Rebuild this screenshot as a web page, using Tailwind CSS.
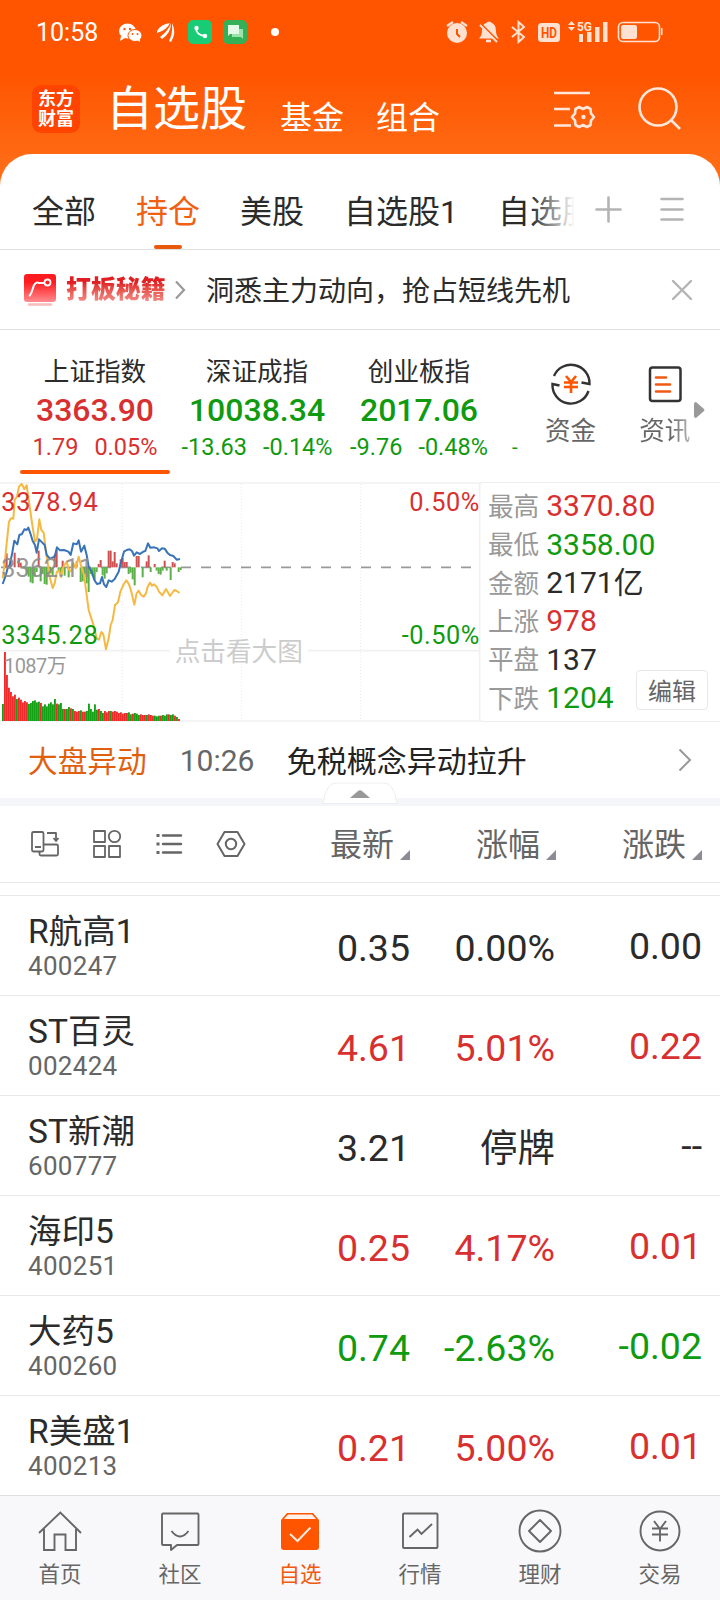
<!DOCTYPE html>
<html lang="zh-CN">
<head>
<meta charset="utf-8">
<title>自选股</title>
<script src="https://cdn.jsdelivr.net/npm/@tailwindcss/browser@4"></script>
</head>
<body class="bg-white">
<div class="w-[720px] h-[1600px] overflow-hidden flex flex-col bg-white font-['Roboto','Noto_Sans_CJK_SC',sans-serif] leading-none text-[#2b2b2b] whitespace-nowrap">

  <div class="bg-linear-to-b from-[#ff5500] from-40% to-[#ff7018] h-[186px] shrink-0 flex flex-col">
    <!-- status bar -->
    <div class="h-[64px] flex items-center pl-[36px] text-white">
      <span class="text-[25px] w-[83px] pt-px">10:58</span>
      <svg width="170" height="30" viewBox="119 17 170 30">
        <ellipse cx="127.500" cy="31" rx="8.500" ry="7.500" fill="#fff"/><path d="M121 36l-1 5 5-3z" fill="#fff"/>
        <ellipse cx="135" cy="35.500" rx="7" ry="6" fill="#fff" stroke="#ff5500" stroke-width="1"/><path d="M137 40l3 2v-4z" fill="#fff"/>
        <g fill="#ff5500"><circle cx="124.500" cy="29" r="1.200"/><circle cx="130" cy="29" r="1.200"/><circle cx="132.500" cy="34" r="1"/><circle cx="137.500" cy="34" r="1"/></g>
        <g fill="#fff"><path d="M157 31Q161 24 170 23Q167 30 157 33z"/><path d="M160 37Q168 31 171 23.500Q171 33 162 39z"/><path d="M169 41Q173 34 172 23Q177 33 171 42z"/></g>
        <rect x="188" y="20" width="24" height="24" rx="5" fill="#17cc75"/>
        <path d="M196 28q0 7 9 8" fill="none" stroke="#fff" stroke-width="1.800"/><circle cx="196.500" cy="28" r="2.200" fill="#fff"/><circle cx="205" cy="36" r="2.200" fill="#fff"/>
        <rect x="223" y="20" width="24" height="24" rx="5" fill="#34b056"/>
        <path d="M232 29h11v10l-2-2h-9z" fill="#9be2ab"/><path d="M228 25h11v9h-9l-2 2z" fill="#e4fae8"/>
        <circle cx="275" cy="32" r="4" fill="#fff"/>
      </svg>
      <svg class="ml-[154px]" width="224" height="30" viewBox="443 17 224 30" fill="none" stroke="#ffe1d1">
        <circle cx="457" cy="33" r="10" fill="#ffe1d1" stroke="none"/><path d="M447 26l6-4M467 26l-6-4" stroke-width="2.200"/><path d="M457 29v5l3 3" stroke="#ff5500" stroke-width="2"/>
        <path d="M479 38.500q3-3 3-8q0-6 4-7.500q3-3 6 0q4 2 4 8q0 5 3 7.500z" fill="#ffe1d1" stroke="none"/><path d="M486 41h5" stroke-width="2.500"/><path d="M481 24l17 17" stroke="#ff5500" stroke-width="2"/><path d="M480 25l17 17" stroke-width="2"/>
        <path d="M512 27l12 10-5.500 5V22l5.500 5-12 10" stroke-width="2"/>
        <rect x="538" y="23" width="22" height="19" rx="3.500" fill="#ffe1d1" stroke="none"/><text x="549" y="38" font-size="14" font-weight="bold" text-anchor="middle" textLength="16" lengthAdjust="spacingAndGlyphs" fill="#ff5500" stroke="none">HD</text>
        <g fill="#ffe1d1" stroke="none"><path d="M568 25l3.500-4 3.500 4zM568 27l3.500 4 3.500-4z"/>
        <text x="577" y="31" font-size="12" font-weight="bold" textLength="15" lengthAdjust="spacingAndGlyphs">5G</text>
        <path d="M579 34h4v8h-4zM587 32h4.500v10H587zM595 27h4.500v15H595zM603 22h4.500v20H603z"/>
        <rect x="621" y="25" width="16" height="14" rx="2"/><path d="M661 28h1.500v7H661z"/></g>
        <rect x="618.500" y="22.500" width="41" height="19" rx="4.500" stroke-width="1.600"/>
      </svg>
    </div>
    <!-- app header -->
    <div class="h-[90px] flex items-start pl-[32px] text-white">
      <div class="mt-[21px] size-[48px] rounded-[9px] bg-[#ff4400] flex flex-col items-center justify-center text-[18px] font-bold gap-[2px]"><span class="leading-[18px]">东方</span><span class="leading-[18px]">财富</span></div>
      <span class="text-[47px] ml-[26px] mt-[21px]">自选股</span>
      <span class="text-[32px] ml-[33px] mt-[38px]">基金</span>
      <span class="text-[32px] ml-[32px] mt-[38px]">组合</span>
      <svg class="ml-[112px] mt-[21px]" width="134" height="48" viewBox="552 85 134 48" fill="none" stroke="#ffe7db" stroke-width="2.600">
        <path d="M554 93h36M554 109h16M554 125.500h17"/>
        <path d="M579 107l4 2 4-2 3.500 2 .500 4.500 3 3.500-3 3.500-.500 4.500-3.500 2-4-2-4 2-3.500-2-.500-4.500-3-3.500 3-3.500.500-4.500z" stroke-linejoin="round"/><circle cx="583.500" cy="117" r="2.200" fill="#ffe7db" stroke="none"/>
        <circle cx="658" cy="107" r="18.500"/><path d="M671 120l9 9"/>
      </svg>
    </div>
  </div>

  <!-- group tabs -->
  <div class="relative -mt-[32px] h-[96px] shrink-0 bg-white rounded-t-[32px] border-b border-[#dfdfdf] flex items-center pl-[32px] text-[32px]">
    <div class="relative w-[543px] h-full overflow-hidden flex items-center gap-[40px] pt-[21px]">
      <span>全部</span><span class="text-[#f06010] relative">持仓<i class="absolute left-[18px] top-[49px] w-[28px] h-[4px] rounded-full bg-[#e8590c]"></i></span><span>美股</span><span>自选股1</span><span>自选股</span>
      <div class="absolute right-0 top-0 h-[90px] w-[44px] bg-linear-to-r from-white/0 to-white"></div>
    </div>
    <svg class="ml-[20px] mt-[17px]" width="90" height="30" viewBox="595 195 90 30" stroke="#b4b4b4" stroke-width="2.600" stroke-linecap="round"><path d="M596.500 209.500h24M608.500 197.500v24"/><path d="M661.500 199h21M661.500 209.500h21M661.500 219.500h21"/></svg>
  </div>

  <!-- banner -->
  <div class="h-[80px] shrink-0 border-b border-[#dfdfdf] flex items-center pl-[24px] text-[28px]">
    <svg width="32" height="32" viewBox="0 0 32 32">
      <defs><linearGradient id="r" x2="0" y2="1"><stop offset=".3" stop-color="#ff1c20"/><stop offset="1" stop-color="#ff8d90"/></linearGradient></defs>
      <rect width="32" height="28" rx="3" fill="url(#r)"/><path d="M5 22Q7 21 9 14T15 9H20" fill="none" stroke="#fff" stroke-width="2"/><circle cx="23.500" cy="8.500" r="3" fill="none" stroke="#fff" stroke-width="1.800"/><path d="M5 30.500h22" stroke="#f8bcbc" stroke-width="2.600" stroke-linecap="round"/>
    </svg>
    <span class="ml-[10px] w-[100px] text-[24.9px] font-black pt-[6px] pb-1 bg-linear-to-b from-[#e01f22] from-30% to-[#f4a0a0] bg-clip-text text-transparent">打板秘籍</span>
    <svg class="ml-[8px]" width="12" height="20" fill="none" stroke="#999" stroke-width="2.200"><path d="M2 1.500l8 8.500-8 8.500"/></svg>
    <span class="ml-[20px] pt-[4px]">洞悉主力动向，抢占短线先机</span>
    <svg class="ml-[101px]" width="22" height="22" stroke="#b4b4b4" stroke-width="2.400" stroke-linecap="round"><path d="M2 2l18 18M20 2L2 20"/></svg>
  </div>

  <!-- indices -->
  <div class="h-[152px] shrink-0 flex">
    <div class="w-[518px] flex pl-[14px]">
      <div class="w-[162px] shrink-0 flex flex-col items-center text-[#d83030]">
        <span class="mt-[30px] text-[25.6px] text-[#2b2b2b]">上证指数</span><b class="mt-[8px] h-[33px] text-[32px] font-medium">3363.90</b>
        <div class="mt-[9px] flex gap-[16px] text-[23.5px]"><span>1.79</span><span>0.05%</span></div>
        <i class="mt-[11px] w-[150px] h-[4px] rounded-full bg-[#ff5500]"></i>
      </div>
      <div class="w-[162px] shrink-0 flex flex-col items-center text-[#0f9a0f]">
        <span class="mt-[30px] text-[25.6px] text-[#2b2b2b]">深证成指</span><b class="mt-[8px] h-[33px] text-[32px] font-medium">10038.34</b>
        <div class="mt-[9px] flex gap-[16px] text-[23.5px]"><span>-13.63</span><span>-0.14%</span></div>
      </div>
      <div class="w-[162px] shrink-0 flex flex-col items-center text-[#0f9a0f]">
        <span class="mt-[30px] text-[25.6px] text-[#2b2b2b]">创业板指</span><b class="mt-[8px] h-[33px] text-[32px] font-medium">2017.06</b>
        <div class="mt-[9px] flex gap-[16px] text-[23.5px]"><span>-9.76</span><span>-0.48%</span></div>
      </div>
      <span class="ml-[12px] mt-[107px] text-[20px] text-[#0f9a0f]">-</span>
    </div>
    <div class="pl-[27px] flex text-[25.6px] text-[#666]">
      <div class="flex flex-col items-center"><svg class="mt-[33px]" width="42" height="42" viewBox="550 363 42 42" fill="none" stroke="#333" stroke-width="2.400">
        <path d="M554 376A18.500 18.500 0 0 1 589.500 384l-8-1.500M588.500 391A18.500 18.500 0 0 1 552.500 384l7 1.500"/><path d="M566 376l5 6 5-6M564 382.500h14M564 387h14M571 382v11" stroke="#ff5500" stroke-width="2.600"/></svg>
        <span class="mt-[14px]">资金</span></div>
      <div class="ml-[43px] flex flex-col items-center"><svg class="mt-[33px]" width="42" height="42" viewBox="644 363 42 42" fill="none" stroke="#333" stroke-width="2.500"><rect x="650" y="367.500" width="30.500" height="33.500" rx="2.500"/><path d="M656 377.500h10M656 384.500h14M656 391.500h14" stroke="#f05a14" stroke-width="2.600" stroke-linecap="round"/></svg>
        <span class="mt-[12px] py-[2px] bg-linear-to-r from-[#666] from-60% to-[#b5b5b5] bg-clip-text text-transparent">资讯</span></div>
      <svg class="ml-[4px] mt-[72px]" width="11" height="16" fill="#999"><path d="M0 2Q0 0 2 0L10 7Q11 8 10 9L2 16Q0 16 0 14z"/></svg>
    </div>
  </div>

  <!-- chart and market breadth -->
  <div class="h-[240px] shrink-0 flex">
    <svg width="482" height="241" viewBox="0 21 1446 723" fill="none" class="shrink-0 font-['Roboto','Noto_Sans_CJK_SC',sans-serif]">
      <path d="M0 24H1446M0 527H510M924 527H1438M0 738H1446M1439 24V738" stroke="#f1f1f1" stroke-width="5"/>
      <path d="M367 27V738M724 27V738M1082 27V738" stroke="#ebebeb" stroke-width="3" stroke-dasharray="3 6"/>
      <path d="M3 277H1415" stroke="#999" stroke-width="5" stroke-dasharray="30 30"/>
      <g id="delta"></g>
      <g id="volume"></g>
      <path d="M8 310L14 265L20 205L27 140L33 130L40 131L44 75L51 65L57 35L65 27L73 42L80 31L87 80L97 150L105 200L111 192L118 133L124 165L131 173L138 230L144 270L150 310L158 339L164 325L170 292L177 286L183 306L190 276L200 260L207 285L213 289L220 265L227 280L236 245L243 272L252 300L260 360L266 405L274 430L282 455L290 490L297 494L304 471L310 478L318 523L326 490L332 450L338 435L345 390L354 382L361 350L370 330L379 316L387 328L394 350L403 389L410 355L416 347L423 360L431 365L438 355L443 335L450 323L456 332L462 328L470 335L477 350L487 361L498 342L510 363L523 345L530 348L539 354" stroke="#f5b942" stroke-width="6" stroke-linejoin="round"/>
      <path d="M8 327L16 305L23 280L29 270L36 238L43 197L52 208L58 180L66 177L73 163L80 165L85 158L91 175L98 198L105 210L110 233L117 193L124 200L134 210L140 240L150 251L164 245L171 217L180 226L192 225L205 230L212 240L220 205L230 208L236 196L243 230L253 212L260 240L266 275L275 290L283 315L291 327L300 325L306 306L312 328L319 336L326 316L335 320L344 312L356 290L363 262L372 230L380 225L389 223L396 228L402 242L410 232L420 237L430 230L436 228L444 205L451 218L463 217L472 220L477 228L486 220L494 221L502 233L510 240L520 243L530 254L540 252" stroke="#3873b8" stroke-width="6" stroke-linejoin="round"/>
      <g font-size="76">
        <text x="4" y="108" fill="#d83030" textLength="289">3378.94</text><text x="4" y="305" fill="#8c8c8c" fill-opacity=".9" textLength="275">3362.11</text><text x="4" y="507" fill="#0f9a0f" textLength="289">3345.28</text>
        <text x="1438" y="108" fill="#d83030" text-anchor="end" textLength="210">0.50%</text><text x="1438" y="507" fill="#0f9a0f" text-anchor="end" textLength="233">-0.50%</text>
      </g>
      <text x="12" y="595" font-size="60" fill="#999" textLength="188">1087万</text>
      <text x="524" y="557" font-size="77" fill="#ccc">点击看大图</text>
    </svg>
    <div class="relative w-[238px] border-y border-[#eee] pl-[6px] pt-[4px] text-[30px]">
      <div class="flex flex-col">
        <div class="h-[38.400px] flex items-center gap-[7px] text-[#d83030]"><span class="pt-[3px] text-[25.6px] text-[#999]">最高</span>3370.80</div>
        <div class="h-[38.400px] flex items-center gap-[7px] text-[#0f9a0f]"><span class="pt-[3px] text-[25.6px] text-[#999]">最低</span>3358.00</div>
        <div class="h-[38.400px] flex items-center gap-[7px]"><span class="pt-[3px] text-[25.6px] text-[#999]">金额</span><span>2171亿</span></div>
        <div class="h-[38.400px] flex items-center gap-[7px] text-[#d83030]"><span class="pt-[3px] text-[25.6px] text-[#999]">上涨</span>978</div>
        <div class="h-[38.400px] flex items-center gap-[7px]"><span class="pt-[3px] text-[25.6px] text-[#999]">平盘</span>137</div>
        <div class="h-[38.400px] flex items-center gap-[7px] text-[#0f9a0f]"><span class="pt-[3px] text-[25.6px] text-[#999]">下跌</span>1204</div>
      </div>
      <div class="absolute right-[12px] bottom-[11px] w-[72px] h-[40px] pt-[3px] rounded-[4px] border border-[#e8e8e8] bg-white flex items-center justify-center text-[24px] text-[#666]">编辑</div>
    </div>
  </div>

  <!-- market alert -->
  <div class="relative h-[84px] shrink-0 border-b-8 border-[#f5f6fa] flex items-center pl-[28px] text-[29.7px]">
    <span class="pt-[3px] text-[#e0600f]">大盘异动</span><span class="ml-[33px] w-[74px] pt-px text-[30px] text-[#666]">10:26</span><span class="ml-[33px] pt-[3px] text-[30px] text-[#222]">免税概念异动拉升</span>
    <svg class="ml-[151px]" width="14" height="24" fill="none" stroke="#999" stroke-width="2"><path d="M1.500 1.500L12 12 1.500 22.500"/></svg>
    <svg class="absolute left-[322px] top-[60px]" width="76" height="23"><path d="M1 21.500Q4 1 14 1H62Q72 1 75 21.500z" fill="#fff" stroke="#eceef1"/><path d="M28 16L36 9Q38 7.500 40 9L48 16z" fill="#999"/></svg>
  </div>

  <!-- table header -->
  <div class="h-[77px] shrink-0 border-b border-[#e8e8e8] flex items-center pl-[30px] pb-[1px] text-[32px] text-[#666]">
    <svg width="218" height="30" viewBox="30 829 218 30" fill="none" stroke="#666" stroke-width="1.800" stroke-linejoin="round">
      <rect x="32" y="832" width="11.500" height="19.500" rx="1.500"/><path d="M35 847h6M47 833h9v8M53.500 838l2.500 3 2.500-3M44 844.500h12.500q1.500 0 1.500 1.500v8q0 1.500-1.500 1.500H41q-1.500 0-1.500-1.500v-2"/>
      <rect x="94" y="831" width="11" height="11"/><rect x="94" y="846" width="11" height="11"/><rect x="109" y="846" width="11" height="11"/><circle cx="114.500" cy="836.500" r="5.700"/>
      <path d="M163 835.500h18M163 844h18M163 852.500h18" stroke-width="2.400" stroke-linecap="round"/><path d="M158 834v3M158 842.500v3M158 851v3" stroke-width="3"/>
      <path d="M224.500 832h13l7 12-7 12h-13l-7-12z" stroke-width="2"/><circle cx="231" cy="844" r="5.200" stroke-width="2"/>
    </svg>
    <div class="ml-[82px] w-[80px] flex items-center justify-between"><span class="pt-[3px]">最新</span><svg class="mt-[22px]" width="10" height="10" fill="#8c8c94"><path d="M10 0v10H0z"/></svg></div>
    <div class="ml-[66px] w-[80px] flex items-center justify-between"><span class="pt-[3px]">涨幅</span><svg class="mt-[22px]" width="10" height="10" fill="#8c8c94"><path d="M10 0v10H0z"/></svg></div>
    <div class="ml-[66px] w-[80px] flex items-center justify-between"><span class="pt-[3px]">涨跌</span><svg class="mt-[22px]" width="10" height="10" fill="#8c8c94"><path d="M10 0v10H0z"/></svg></div>
  </div>
  <div class="h-[13px] shrink-0 border-b border-[#e8e8e8]"></div>

  <!-- stock rows -->
  <div class="h-[100px] shrink-0 border-b border-[#e8e8e8] flex items-center pl-[28px] text-[37.5px]">
    <div class="w-[232px] flex flex-col gap-[5px] pt-[3px]"><span class="text-[33.5px]">R航高1</span><span class="text-[26px] tracking-[0.3px] text-[#666]">400247</span></div><span class="w-[150px] text-right pt-[6px]">0.35</span><span class="w-[145px] text-right pt-[6px]">0.00%</span><span class="w-[147px] text-right pt-[2px]">0.00</span>
  </div>
  <div class="h-[100px] shrink-0 border-b border-[#e8e8e8] flex items-center pl-[28px] text-[37.5px] text-[#d83030]">
    <div class="w-[232px] flex flex-col gap-[5px] pt-[3px]"><span class="text-[33.5px] text-[#2b2b2b]">ST百灵</span><span class="text-[26px] tracking-[0.3px] text-[#666]">002424</span></div><span class="w-[150px] text-right pt-[6px]">4.61</span><span class="w-[145px] text-right pt-[6px]">5.01%</span><span class="w-[147px] text-right pt-[2px]">0.22</span>
  </div>
  <div class="h-[100px] shrink-0 border-b border-[#e8e8e8] flex items-center pl-[28px] text-[37.5px]">
    <div class="w-[232px] flex flex-col gap-[5px] pt-[3px]"><span class="text-[33.5px]">ST新潮</span><span class="text-[26px] tracking-[0.3px] text-[#666]">600777</span></div><span class="w-[150px] text-right pt-[6px]">3.21</span><span class="w-[145px] text-right pt-[7px]">停牌</span><span class="w-[147px] text-right pt-[2px]">--</span>
  </div>
  <div class="h-[100px] shrink-0 border-b border-[#e8e8e8] flex items-center pl-[28px] text-[37.5px] text-[#d83030]">
    <div class="w-[232px] flex flex-col gap-[5px] pt-[3px]"><span class="text-[33.5px] text-[#2b2b2b]">海印5</span><span class="text-[26px] tracking-[0.3px] text-[#666]">400251</span></div><span class="w-[150px] text-right pt-[6px]">0.25</span><span class="w-[145px] text-right pt-[6px]">4.17%</span><span class="w-[147px] text-right pt-[2px]">0.01</span>
  </div>
  <div class="h-[100px] shrink-0 border-b border-[#e8e8e8] flex items-center pl-[28px] text-[37.5px] text-[#0f9a0f]">
    <div class="w-[232px] flex flex-col gap-[5px] pt-[3px]"><span class="text-[33.5px] text-[#2b2b2b]">大药5</span><span class="text-[26px] tracking-[0.3px] text-[#666]">400260</span></div><span class="w-[150px] text-right pt-[6px]">0.74</span><span class="w-[145px] text-right pt-[6px]">-2.63%</span><span class="w-[147px] text-right pt-[2px]">-0.02</span>
  </div>
  <div class="h-[99px] shrink-0 flex items-center pl-[28px] text-[37.5px] text-[#d83030]">
    <div class="w-[232px] flex flex-col gap-[5px] pt-[3px]"><span class="text-[33.5px] text-[#2b2b2b]">R美盛1</span><span class="text-[26px] tracking-[0.3px] text-[#666]">400213</span></div><span class="w-[150px] text-right pt-[6px]">0.21</span><span class="w-[145px] text-right pt-[6px]">5.00%</span><span class="w-[147px] text-right pt-[2px]">0.01</span>
  </div>

  <!-- bottom navigation -->
  <div class="h-[105px] shrink-0 border-t border-[#dfdfdf] bg-[#f8f8fa] grid grid-cols-6 text-[21.5px] text-[#666]">
    <div class="flex flex-col items-center gap-[11px] pt-[13px]"><svg width="44" height="44" viewBox="38 1509 44 44" fill="none" stroke="#666" stroke-width="1.900"><path d="M39 1533l21.300-20.500L81 1533M44 1529v21h10.500v-15.500h11V1550H76v-21"/></svg>首页</div>
    <div class="flex flex-col items-center gap-[11px] pt-[13px]"><svg width="44" height="44" viewBox="158 1509 44 44" fill="none" stroke="#666" stroke-width="1.900" stroke-linejoin="round"><path d="M163 1513.500h34.500q1 0 1 1v29.500q0 1-1 1H177l-6 5v-5h-8q-1 0-1-1v-29.500q0-1 1-1z"/><path d="M171.500 1531q8.500 11 17 0"/></svg>社区</div>
    <div class="flex flex-col items-center gap-[11px] pt-[13px] text-[#f05a10]"><svg width="44" height="44" viewBox="278 1509 44 44" fill="none"><path d="M281 1520l6-7h26l6 7v27q0 3-3 3h-32q-3 0-3-3z" fill="#ff5500"/><path d="M284 1519l4-4.500h24l4 4.500z" fill="#fff1ea"/><path d="M290 1534l7.500 7 13-13.500" stroke="#ffe9de" stroke-width="2"/></svg>自选</div>
    <div class="flex flex-col items-center gap-[11px] pt-[13px]"><svg width="44" height="44" viewBox="398 1509 44 44" fill="none" stroke="#666" stroke-width="1.900"><rect x="403" y="1513.500" width="34.500" height="34.500" rx="1"/><path d="M409.500 1537l8-7.500 4 4.500 10.500-10"/></svg>行情</div>
    <div class="flex flex-col items-center gap-[11px] pt-[13px]"><svg width="44" height="44" viewBox="518 1509 44 44" fill="none" stroke="#666" stroke-width="1.900" stroke-linejoin="round"><circle cx="540" cy="1531" r="20.500"/><path d="M540 1520l11 11-11 11-11-11z"/></svg>理财</div>
    <div class="flex flex-col items-center gap-[11px] pt-[13px]"><svg width="44" height="44" viewBox="638 1509 44 44" fill="none" stroke="#666" stroke-width="1.900"><circle cx="660" cy="1531" r="19.500"/><path d="M654 1521l6 8 6-8M652 1528.500h16M652 1534.500h16M660 1529v12.500"/></svg>交易</div>
  </div>
</div>
<script>
const ns = 'http://www.w3.org/2000/svg';
function bar(id, x, y, h, w, fill) {
  const r = document.createElementNS(ns, 'rect');
  for (const [k, v] of Object.entries({x, y, width: w, height: h, fill})) r.setAttribute(k, v);
  document.getElementById(id).appendChild(r);
}
// Volume per minute; colour flag: r = up, g = down
const vol = [51,207,138,100,87,74,79,66,70,64,56,60,56,51,54,60,62,56,58,54,44,50,44,52,56,50,66,52,50,54,36,36,36,42,38,36,30,28,30,32,28,28,30,52,36,28,50,34,36,30,24,30,26,30,30,28,30,28,24,26,22,24,24,26,20,22,24,22,18,20,18,18,18,20,18,16,16,14,16,16,18,16,20,20,18,20,16,12,6];
const vc = 'grrrrrrgrrrrrggggggrgggggggrgggrggrgrrrgrrggggggrggrrrgrrrrrrrrggrgggrrrgrrrgggrgggrggrgr';
vol.forEach((h, i) => bar('volume', 6 + i * 6, 738 - h, h, 5.6, vc[i] === 'r' ? '#ee2a2a' : '#14a014'));
// Buying/selling pressure around the zero axis
const d = [[12,12],[18,42],[30,25],[42,44],[54,28],[60,14],[78,-20],[84,-28],[90,-45],[96,-48],[102,-28],[108,-14],[114,50],[120,-42],[126,-20],[132,-50],[138,-52],[144,-26],[150,-18],[156,-24],[162,38],[168,54],[174,-14],[180,-28],[186,20],[192,-25],[204,-30],[216,12],[228,18],[240,-44],[246,-42],[252,-20],[258,-48],[264,-74],[270,-20],[276,-26],[282,-38],[288,-14],[294,10],[300,22],[306,-24],[312,-34],[318,-18],[324,50],[330,50],[336,18],[342,46],[348,12],[360,24],[366,28],[372,16],[378,16],[384,-20],[390,-16],[396,-36],[402,-54],[408,34],[414,34],[426,-30],[438,18],[444,36],[450,-14],[462,10],[468,-10],[474,-20],[480,-22],[486,-10],[492,20],[498,-10],[510,-38],[516,16],[522,12],[534,-14],[540,-8]];
d.forEach(([x, v]) => bar('delta', x - 1, v > 0 ? 277 - v : 277, Math.abs(v), 6, v > 0 ? '#cf5252' : '#5cb04a'));
</script>
</body>
</html>
